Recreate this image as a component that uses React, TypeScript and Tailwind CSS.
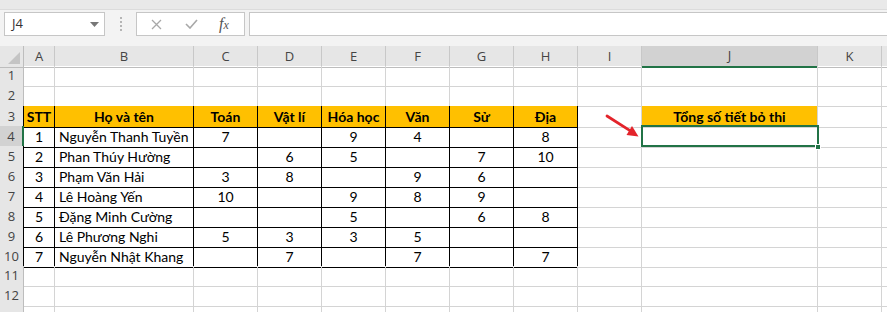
import React from 'react';
import clsx from 'clsx';

type Row = { stt: number; name: string; marks: (number | null)[] };

const STUDENTS: Row[] = [
  { stt: 1, name: 'Nguyễn Thanh Tuyền', marks: [7, null, 9, 4, null, 8] },
  { stt: 2, name: 'Phan Thúy Hường', marks: [null, 6, 5, null, 7, 10] },
  { stt: 3, name: 'Phạm Văn Hải', marks: [3, 8, null, 9, 6, null] },
  { stt: 4, name: 'Lê Hoàng Yến', marks: [10, null, 9, 8, 9, null] },
  { stt: 5, name: 'Đặng Minh Cường', marks: [null, null, 5, null, 6, 8] },
  { stt: 6, name: 'Lê Phương Nghi', marks: [5, 3, 3, 5, null, null] },
  { stt: 7, name: 'Nguyễn Nhật Khang', marks: [null, 7, null, 7, null, 7] },
];

const HEADERS = ['STT', 'Họ và tên', 'Toán', 'Vật lí', 'Hóa học', 'Văn', 'Sử', 'Địa'];
const COLS = ['A', 'B', 'C', 'D', 'E', 'F', 'G', 'H', 'I', 'J', 'K'];

const gridCols =
  'grid grid-cols-[24px_31px_139px_64px_64px_64px_64px_64px_64px_64px_176px_64px_1fr]';

// text content for row r (1-based), column c (1 = A ... 11 = K)
function cellText(r: number, c: number): string {
  if (r === 3 && c >= 1 && c <= 8) return HEADERS[c - 1];
  if (r === 3 && c === 10) return 'Tổng số tiết bỏ thi';
  if (r >= 4 && r <= 10) {
    const s = STUDENTS[r - 4];
    if (c === 1) return String(s.stt);
    if (c === 2) return s.name;
    if (c >= 3 && c <= 8) {
      const m = s.marks[c - 3];
      return m === null ? '' : String(m);
    }
  }
  return '';
}

const Cell: React.FC<{ r: number; c: number }> = ({ r, c }) => {
  const inTable = r >= 3 && r <= 10 && c >= 1 && c <= 8;
  const header = r === 3 && (inTable || c === 10);
  const selected = r === 4 && c === 10;
  const text = cellText(r, c);

  return (
    <div
      className={clsx(
        'flex items-center border-b border-r overflow-visible whitespace-nowrap',
        inTable ? 'border-black' : 'border-[#d4d4d4]',
        r === 2 && c >= 1 && c <= 8 && 'border-b-black',
        header && 'bg-[#ffc000] font-bold',
        c === 2 && !header ? 'justify-start pl-[4px]' : 'justify-center',
        c === 12 && 'border-r-0',
        selected && 'relative'
      )}
    >
      {text}
      {selected && (
        <>
          <div className="absolute -left-px -top-px w-[178px] h-[22px] border-2 border-[#217346] z-10" />
          <div className="absolute left-[173px] top-[18px] w-[6px] h-[6px] bg-[#217346] border border-white z-20" />
        </>
      )}
    </div>
  );
};

const FormulaBar: React.FC = () => (
  <div className="h-[46px] bg-[#f3f3f3] relative">
    <div className="h-[10px] bg-[#e9e9e9] border-b border-[#dcdcdc]" />
    <div className="flex items-center pt-[2px] pl-[4px] h-[24px] box-content">
      <div className="w-[101px] h-[24px] bg-white border border-[#c6c6c6] flex items-center justify-between pl-[7px] pr-[5px]">
        <span className="text-[13px] text-[#333] font-['Open_Sans',sans-serif]">J4</span>
        <svg width="9" height="5" viewBox="0 0 9 5">
          <path d="M0 0 L9 0 L4.5 5 Z" fill="#777" />
        </svg>
      </div>
      <div className="w-[31px] flex flex-col items-center gap-[2px]">
        <span className="w-[2px] h-[2px] bg-[#b5b5b5]" />
        <span className="w-[2px] h-[2px] bg-[#b5b5b5]" />
        <span className="w-[2px] h-[2px] bg-[#b5b5b5]" />
        <span className="w-[2px] h-[2px] bg-[#b5b5b5]" />
      </div>
      <div className="w-[109px] h-[24px] bg-white border border-[#c6c6c6] flex items-center">
        <svg width="11" height="11" viewBox="0 0 11 11" className="ml-[14px]">
          <path d="M1 1 L10 10 M10 1 L1 10" stroke="#a8a8a8" strokeWidth="1.3" fill="none" />
        </svg>
        <svg width="13" height="10" viewBox="0 0 13 10" className="ml-[23px]">
          <path d="M1 5 L5 9 L12 1" stroke="#a8a8a8" strokeWidth="1.6" fill="none" />
        </svg>
        <span className="ml-[21px] text-[16px] italic text-[#555] font-['Liberation_Serif',serif] leading-none">
          f<span className="text-[12px]">x</span>
        </span>
      </div>
      <div className="ml-[4px] flex-1 h-[24px] bg-white border border-[#c6c6c6] border-r-0" />
    </div>
  </div>
);

export default function App() {
  const rows = Array.from({ length: 13 }, (_, i) => i + 1);

  return (
    <div className="w-[887px] h-[312px] overflow-hidden bg-white font-['Lato','Noto_Sans',sans-serif] text-[14px] text-black">
      <FormulaBar />

      <div className="relative">
        {/* column headers */}
        <div className={clsx(gridCols, 'h-[20px] bg-[#e6e6e6] text-[13px] text-[#444] font-["Open_Sans",sans-serif]')}>
          <div className="relative border-r border-b border-[#bdbdbd]">
            <svg width="12" height="12" viewBox="0 0 12 12" className="absolute right-[3px] bottom-[3px]">
              <path d="M12 0 L12 12 L0 12 Z" fill="#c4c4c4" />
            </svg>
          </div>
          {COLS.map((col) => (
            <div
              key={col}
              className={clsx(
                'flex items-center justify-center border-r border-[#c8c8c8]',
                col === 'J' ? 'bg-[#d2d2d2] border-b-2 border-b-[#217346]' : 'border-b border-b-[#bdbdbd]'
              )}
            >
              {col}
            </div>
          ))}
          <div className="border-b border-[#bdbdbd]" />
        </div>

        {rows.map((r) => (
          <div key={r} className={clsx(gridCols, 'h-[20px]')}>
            <div
              className={clsx(
                'flex items-center justify-center text-[13px] text-[#444] font-["Open_Sans",sans-serif] border-b border-b-[#d4d4d4]',
                r === 4
                  ? 'bg-[#d2d2d2] border-r-2 border-r-[#217346]'
                  : r >= 3 && r <= 10
                    ? 'bg-[#e6e6e6] border-r border-r-black'
                    : 'bg-[#e6e6e6] border-r border-r-[#bdbdbd]'
              )}
            >
              {r < 13 ? r : ''}
            </div>
            {Array.from({ length: 12 }, (_, i) => (
              <Cell key={i} r={r} c={i + 1} />
            ))}
          </div>
        ))}

        {/* red annotation arrow */}
        <svg
          width="45"
          height="35"
          viewBox="0 0 45 35"
          className="absolute left-[600px] top-[64px] z-20"
        >
          <line x1="7" y1="6" x2="30" y2="20.6" stroke="#e3242b" strokeWidth="2.8" strokeLinecap="round" />
          <path d="M38.5 26.5 L26.5 25 L32 16 Z" fill="#e3242b" />
        </svg>
      </div>
    </div>
  );
}
